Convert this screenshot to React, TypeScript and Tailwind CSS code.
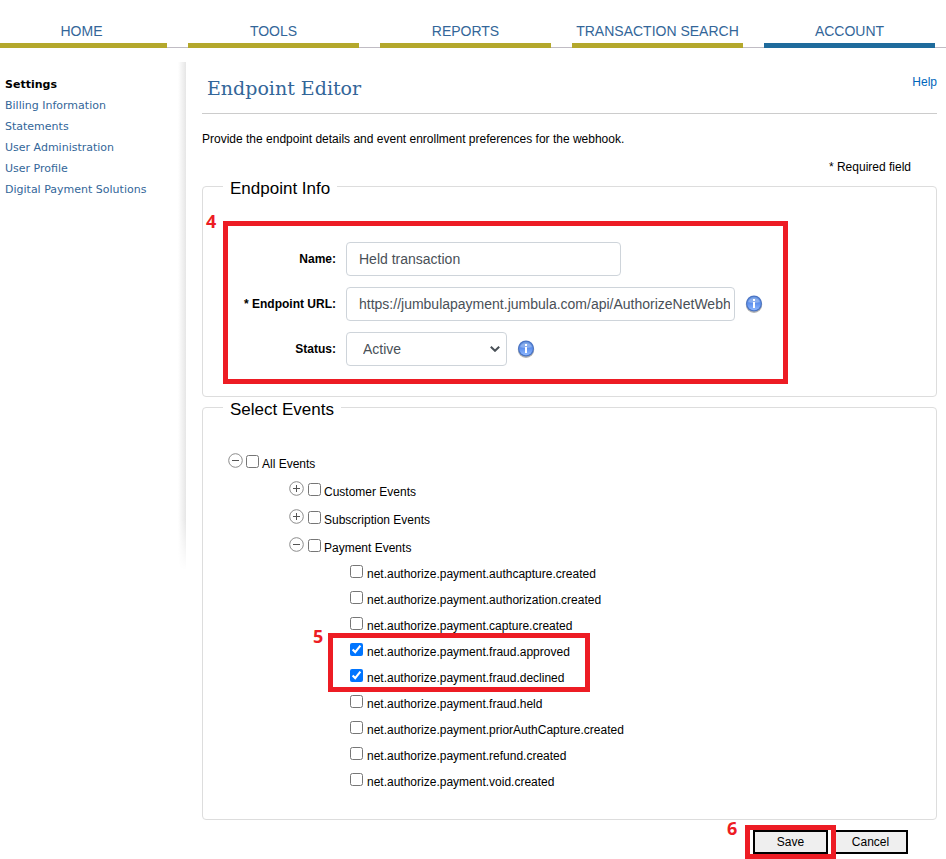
import type { ReactNode } from 'react';

const tabs = [
  { label: 'HOME', active: false },
  { label: 'TOOLS', active: false },
  { label: 'REPORTS', active: false },
  { label: 'TRANSACTION SEARCH', active: false },
  { label: 'ACCOUNT', active: true },
];

const settingsLinks = [
  'Billing Information',
  'Statements',
  'User Administration',
  'User Profile',
  'Digital Payment Solutions',
];

const paymentEvents = [
  { name: 'net.authorize.payment.authcapture.created', on: false },
  { name: 'net.authorize.payment.authorization.created', on: false },
  { name: 'net.authorize.payment.capture.created', on: false },
  { name: 'net.authorize.payment.fraud.approved', on: true },
  { name: 'net.authorize.payment.fraud.declined', on: true },
  { name: 'net.authorize.payment.fraud.held', on: false },
  { name: 'net.authorize.payment.priorAuthCapture.created', on: false },
  { name: 'net.authorize.payment.refund.created', on: false },
  { name: 'net.authorize.payment.void.created', on: false },
];

function InfoIcon({ id }: { id: string }) {
  return (
    <svg width="18" height="18" viewBox="0 0 18 18" role="img" aria-label="More information">
      <defs>
        <linearGradient id={id} x1="0" y1="0" x2="0" y2="1">
          <stop offset="0" stopColor="#6f9ae0" />
          <stop offset="0.5" stopColor="#5f91ee" />
          <stop offset="1" stopColor="#8fb8ff" />
        </linearGradient>
      </defs>
      <circle cx="9" cy="9.8" r="8.200" fill="#000" opacity="0.3" />
      <circle cx="9" cy="8.500" r="8" fill="#4a74c4" />
      <circle cx="9" cy="8.500" r="6.8" fill={`url(#${id})`} />
      <path d="M3.2 7a6 5 0 0 1 11.6 0q-5.800 2-11.600 0z" fill="#fff" opacity="0.25" />
      <rect x="8" y="4" width="2" height="2" fill="#fff" />
      <rect x="8" y="7" width="2" height="6" fill="#fff" />
    </svg>
  );
}

function Toggle({ open, label }: { open: boolean; label: string }) {
  return (
    <button type="button" aria-expanded={open} aria-label={label} className="mb-[7px] shrink-0">
      <svg width="15" height="15" viewBox="0 0 15 15" fill="none" className="block">
        <circle cx="7.5" cy="7.5" r="6.8" stroke="#8c8c8c" />
        <path d="M4 7.5h7" stroke="#555" />
        {!open && <path d="M7.500 4v7" stroke="#555" />}
      </svg>
    </button>
  );
}

function EventCheck({ id, label, on = false, wide = false }: { id: string; label: string; on?: boolean; wide?: boolean }) {
  return (
    <div className={wide ? 'flex items-center gap-1' : 'flex items-center gap-[3px]'}>
      <input id={id} type="checkbox" defaultChecked={on} className="mb-[5px] h-[13px] w-[13px] shrink-0" />
      <label htmlFor={id}>{label}</label>
    </div>
  );
}

function Group({ id, label, open, nested = false }: { id: string; label: string; open: boolean; nested?: boolean }) {
  return (
    <div className={nested ? 'flex h-7 items-center gap-1' : 'flex h-7 items-center gap-[3px]'}>
      <Toggle open={open} label={`Toggle ${label}`} />
      <EventCheck id={id} label={label} />
    </div>
  );
}

function Panel({ title, children }: { title: string; children: ReactNode }) {
  return (
    <fieldset className="-mt-[2px] min-w-0 rounded border border-[#dddddd]">
      <legend className="ml-5 px-[7px] pt-[6px] text-[17px] leading-[18px]">{title}</legend>
      {children}
    </fieldset>
  );
}

function Step({ n, className }: { n: number; className: string }) {
  return (
    <span className={className}>
      <b className="block font-[family-name:Noto_Sans,Open_Sans,sans-serif] text-lg leading-5 font-bold text-[#ed1c24]">{n}</b>
    </span>
  );
}

const control = 'h-[34px] rounded border border-[#ced4da] bg-white text-sm text-[#495057]';
const fieldLabel = 'w-[108px] shrink-0 text-right font-bold';
const action = 'h-6 w-[75px] border-2 border-black bg-[#efefef] text-center leading-5';

export default function App() {
  return (
    <div className='overflow-x-hidden bg-white pb-[5px] font-["Liberation_Sans",Arial,sans-serif] text-xs leading-4 text-black'>
      <nav className="border-b border-[#c0bcc4] pt-5">
        <div className="-mb-px -ml-1 mr-[11px] grid grid-cols-5 gap-[21px]">
          {tabs.map((tab) => (
            <a
              key={tab.label}
              href="#"
              className={
                tab.active
                  ? 'border-b-[5px] border-[#1f6b9c] pb-px text-center text-sm leading-[22px] whitespace-nowrap text-[#336699]'
                  : 'border-b-[5px] border-[#b4a82c] pb-px text-center text-sm leading-[22px] whitespace-nowrap text-[#336699]'
              }
            >
              {tab.label}
            </a>
          ))}
        </div>
      </nav>

      <div className="flex items-start pt-[14px]">
        <aside className="flex h-[508px] w-[186px] shrink-0 justify-between">
          <div className='pt-[13px] pl-[5px] font-["DejaVu_Sans",Verdana,sans-serif] text-[11px] whitespace-nowrap'>
            <h2 className="leading-5 font-bold">Settings</h2>
            <ul className="leading-[21px] text-[#336699]">
              {settingsLinks.map((link) => (
                <li key={link}>
                  <a href="#">{link}</a>
                </li>
              ))}
            </ul>
          </div>
          <div className="w-2 bg-linear-to-r from-white to-[#e6e6e6] mask-b-from-90%" />
        </aside>

        <main className="min-w-0 flex-1 pr-[9px] pl-4">
          <header className="flex h-[52px] justify-between border-b border-[#cccccc]">
            <h1 className='pl-[5px] font-["DejaVu_Serif",Georgia,serif] text-[19px] leading-[52px] text-[#336699]'>
              Endpoint Editor
            </h1>
            <a href="#" className="pt-3 text-[#0066bb]">
              Help
            </a>
          </header>
          <p className="mt-[17px]">Provide the endpoint details and event enrollment preferences for the webhook.</p>
          <p className="mt-3 mr-[26px] mb-px text-right">* Required field</p>

          <form>
            <Panel title="Endpoint Info">
              <div className="relative mx-5 mt-[23px] mb-3 max-w-[565px] border-[5px] border-[#ed1c24] pt-4 pb-[13px]">
                <Step n={4} className="absolute -top-[15px] -left-[22px]" />
                <div className="flex flex-col gap-[11px]">
                  <div className="flex items-center gap-[10px]">
                    <label htmlFor="name" className={fieldLabel}>
                      Name:
                    </label>
                    <input id="name" type="text" defaultValue="Held transaction" className={`${control} w-[275px] px-3`} />
                  </div>
                  <div className="flex items-center gap-[10px]">
                    <label htmlFor="url" className={fieldLabel}>
                      * Endpoint URL:
                    </label>
                    <input
                      id="url"
                      type="text"
                      defaultValue="https://jumbulapayment.jumbula.com/api/AuthorizeNetWebhook"
                      className={`${control} w-[389px] pr-1 pl-3`}
                    />
                    <InfoIcon id="info-url" />
                  </div>
                  <div className="flex items-center gap-[10px]">
                    <label htmlFor="status" className={fieldLabel}>
                      Status:
                    </label>
                    <div className="relative w-[161px]">
                      <select id="status" defaultValue="Active" className={`${control} block w-full appearance-none px-4`}>
                        <option>Active</option>
                        <option>Inactive</option>
                      </select>
                      <svg
                        width="10"
                        height="6"
                        viewBox="0 0 10 6"
                        fill="none"
                        className="pointer-events-none absolute top-[14px] right-[7px]"
                      >
                        <path d="M0.800 0.800L5 4.800L9.200 0.800" stroke="#495057" strokeWidth="2" />
                      </svg>
                    </div>
                    <InfoIcon id="info-status" />
                  </div>
                </div>
              </div>
            </Panel>

            <Panel title="Select Events">
              <div className="pt-[31px] pb-6 pl-[25px]">
                <Group id="all" label="All Events" open />
                <div className="pl-[61px]">
                  <Group id="customer" label="Customer Events" open={false} nested />
                  <Group id="subscription" label="Subscription Events" open={false} nested />
                  <Group id="payment" label="Payment Events" open nested />
                  <ul className="relative -mt-px pl-[61px]">
                    {paymentEvents.map((event) => (
                      <li key={event.name} className="flex h-[26px] items-center">
                        <EventCheck id={event.name} label={event.name} on={event.on} wide />
                      </li>
                    ))}
                    <li
                      aria-hidden="true"
                      className="pointer-events-none absolute top-[72px] left-[39px] h-[59px] w-[262px] border-[5px] border-[#ed1c24]"
                    >
                      <Step n={5} className="absolute -top-3 -left-5" />
                    </li>
                  </ul>
                </div>
              </div>
            </Panel>

            <div className="mt-[10px] mr-[29px] flex justify-end gap-[5px]">
              <div className="relative">
                <button type="button" className={`${action} block`}>
                  Save
                </button>
                <div className="pointer-events-none absolute -inset-x-2 -inset-y-[5px] border-[5px] border-[#ed1c24]">
                  <Step n={6} className="absolute -top-3 -left-[23px]" />
                </div>
              </div>
              <button type="button" className={action}>
                Cancel
              </button>
            </div>
          </form>
        </main>
      </div>
    </div>
  );
}
